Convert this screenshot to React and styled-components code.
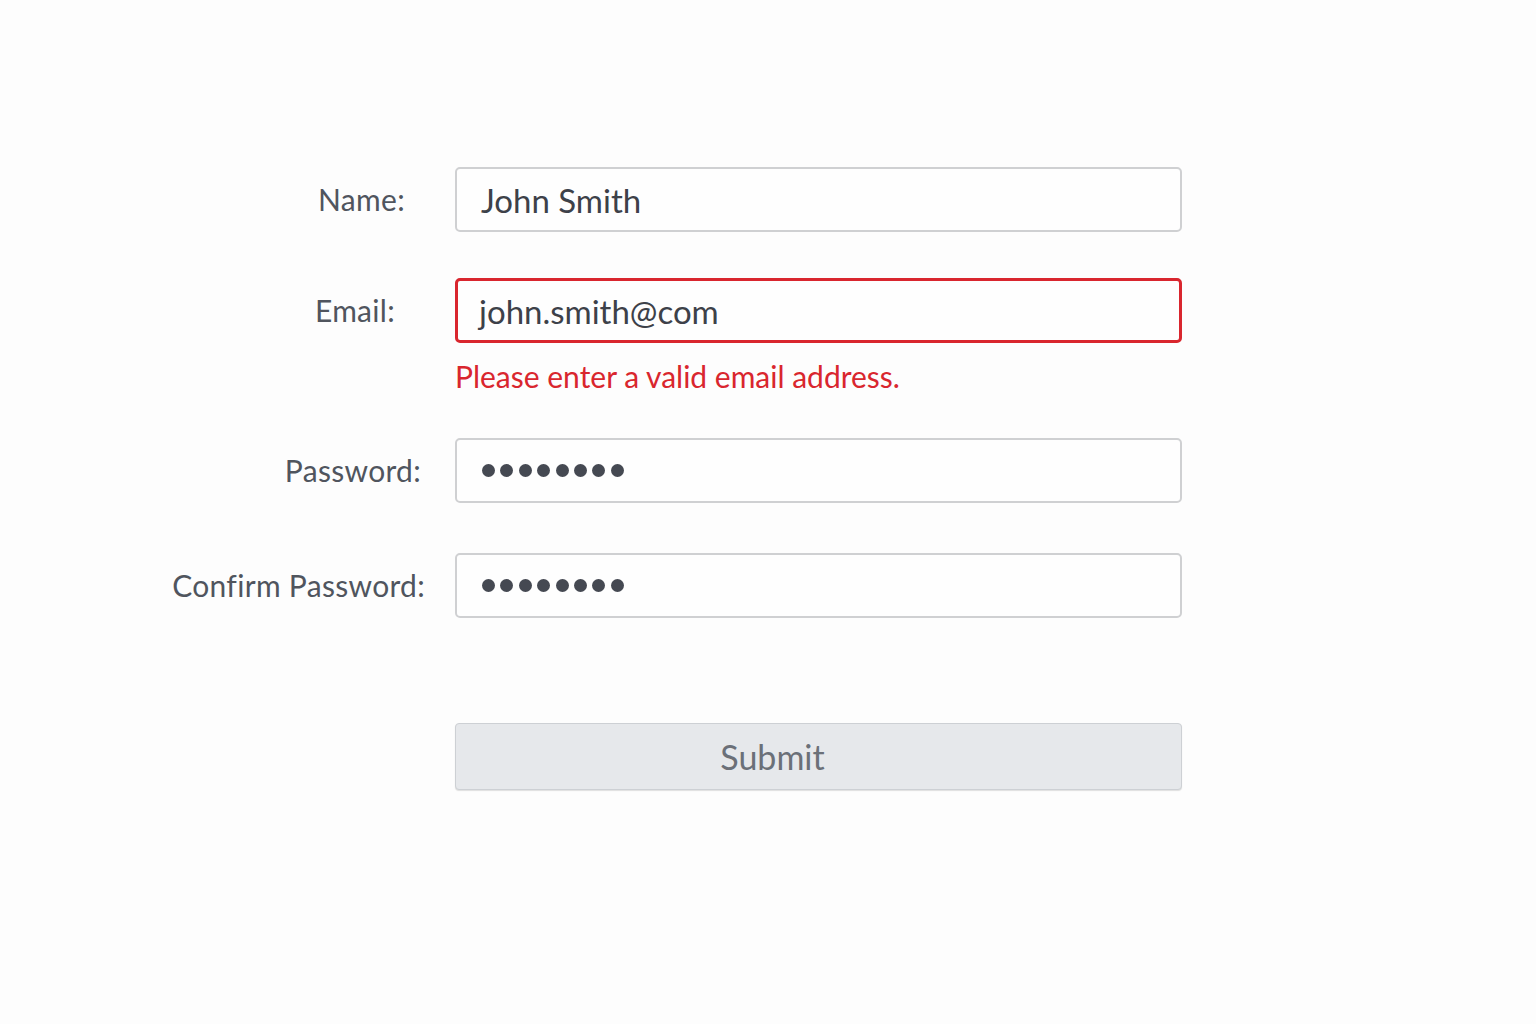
import React from 'react'
import styled, { createGlobalStyle } from 'styled-components'

const GlobalStyle = createGlobalStyle`
  html, body {
    margin: 0;
    background: #fdfdfd;
    font-family: 'Lato', 'Open Sans', sans-serif;
  }
`

function Dots({ count }) {
  return (
    <DotRow>
      {Array.from({ length: count }).map((_, i) => (
        <Dot key={i} />
      ))}
    </DotRow>
  )
}

function App() {
  const fields = [
    { id: 'name', label: 'Name:', value: 'John Smith', trim: 20, gap: 0 },
    { id: 'email', label: 'Email:', value: 'john.smith@com', trim: 30, gap: 46, error: 'Please enter a valid email address.' },
    { id: 'password', label: 'Password:', secret: 8, trim: 4, gap: 45 },
    { id: 'confirm', label: 'Confirm Password:', secret: 8, trim: -5, gap: 50 },
  ]

  return (
    <Page>
      <GlobalStyle />
      <Form>
        {fields.map((f) => (
          <React.Fragment key={f.id}>
            <Label htmlFor={f.id} $trim={f.trim} $gap={f.gap}>{f.label}</Label>
            <Field id={f.id} $error={!!f.error} $gap={f.gap}>
              {f.secret ? <Dots count={f.secret} /> : f.value}
            </Field>
            {f.error && (
              <>
                <span />
                <ErrorText>{f.error}</ErrorText>
              </>
            )}
          </React.Fragment>
        ))}
        <span />
        <SubmitButton type="button">Submit</SubmitButton>
      </Form>
    </Page>
  )
}

export default App

const Page = styled.div`
  width: 1536px;
  height: 1024px;
  padding-top: 167px;
  box-sizing: border-box;
`

const Form = styled.form`
  display: grid;
  grid-template-columns: 425px 727px;
  column-gap: 30px;
  align-items: center;
`

const Label = styled.label`
  justify-self: end;
  margin-top: ${(p) => p.$gap}px;
  padding-right: ${(p) => p.$trim}px;
  font-size: 30px;
  letter-spacing: 0.3px;
  color: #50555e;
  line-height: 65px;
`

const Field = styled.div`
  margin-top: ${(p) => p.$gap}px;
  height: 65px;
  box-sizing: border-box;
  border: ${(p) => (p.$error ? '3px solid #d9262e' : '2px solid #cfd0d2')};
  border-radius: 5px;
  background: #fefefe;
  display: flex;
  align-items: center;
  padding-left: ${(p) => (p.$error ? '21px' : '24px')};
  font-size: 33px;
  color: #3d4149;
`

const DotRow = styled.div`
  display: flex;
  gap: 5.4px;
  padding-left: 1px;
`

const Dot = styled.span`
  width: 13px;
  height: 13px;
  border-radius: 50%;
  background: #454952;
`

const ErrorText = styled.div`
  margin-top: 16px;
  line-height: 34px;
  font-size: 30px;
  color: #d9262e;
`

const SubmitButton = styled.button`
  margin-top: 105px;
  height: 67px;
  width: 727px;
  border: 1px solid #cdd0d4;
  border-radius: 4px;
  background: #e6e8eb;
  box-shadow: 0 1px 1px rgba(0, 0, 0, 0.12);
  font-family: 'Lato', 'Open Sans', sans-serif;
  font-size: 34px;
  color: #6b7078;
  padding: 0 92px 0 0;
`
